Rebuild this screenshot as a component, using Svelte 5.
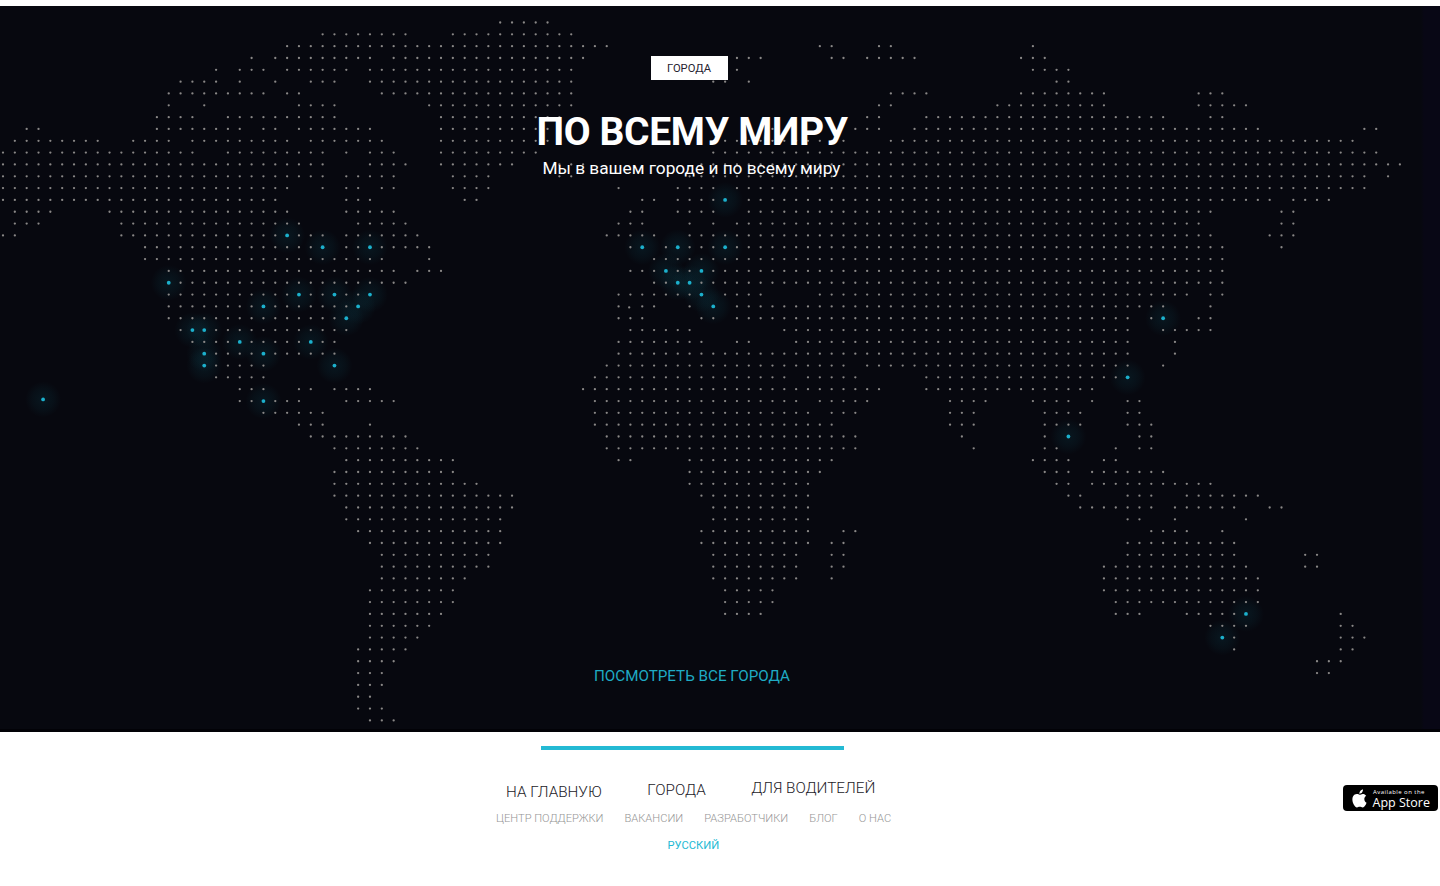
<script>
  // Land dots of the world map: one entry per grid row, "from-to" column ranges.
  const rows = [
    '42-46',
    '27-34,38-48',
    '24-51,69-70,74-75,87',
    '21,23-31,33-49,62-64,70-71,73-77,86-88',
    '18,20-22,24-29,31-48,62,87-90',
    '15-18,20,23,26-28,31-48,60-61,63,89-90',
    '14-22,24-25,32-48,75-78,86-93,101-103',
    '14,17,25-28,36-48,74-75,84-93,101-105',
    '13-16,19-28,37-47,73-74,78-98,102-103',
    '2-3,13-20,22-23,25-31,37-46,65,72-74,77-106,115-116',
    '1-8,11-14,16-24,26-32,37-46,61-71,75-114',
    '0-16,19-27,29,31-33,37-45,60-116',
    '0-27,31-34,37-43,47-49,59-118',
    '0-27,29-33,38-41,47-48,58-115,117',
    '0-24,27,29-30,32-33,38-41,52,57-60,62-115',
    '0-23,29-31,39-40,54-55,57-60,63-107,109-112',
    '1-4,9-24,29-33,53-54,57-60,63-102,108-109',
    '1-3,10-25,30-34,52-54,58,60,62-101,108-109',
    '0-1,10-27,29-35,51-55,58-102,107-109',
    '12-27,29-36,53-54,56-103,108',
    '12-32,36,55-103',
    '14-33,35-37,53-103',
    '14-34,55-103',
    '14-31,52-59,61-64,69-100,102-103',
    '14-30,52,54-55,58,60,62-98,102',
    '14-29,52-54,59-60,62-95,97-98,101-102',
    '15-29,53-58,66-95,98-102',
    '16-28,52-59,62-63,67-95,99',
    '17-28,52-95,99',
    '17-22,28,51-71,73-95,98',
    '18-22,50-66,68-72,78-95',
    '20-22,25-26,28-31,49-74,78-92',
    '20-25,29-33,50-67,69-73,80-83,87-90,92,95-96',
    '22-27,50-68,70-72,80-82,88-91,95-96',
    '25-27,31,50-70,80-82,88-91,95-97',
    '26-34,51-72,81,88,90,96-97',
    '28-35,51-72,82,88-89,94,96-97',
    '29-38,52-53,58-70,87-90,93-94',
    '28-38,58-69,88-90,92-98',
    '28-40,58-68,89-90,92-102',
    '28-43,59-68,90-91,95-97,100-106',
    '29-43,60-68,91-97,99-104,107-108',
    '29-42,60-68,95-96,99,105',
    '30-42,59-68,71-72,97-100,103',
    '31-42,59-68,70-71,95-104',
    '32-41,60-67,70-71,95-104,110-111',
    '32-41,60-67,70-71,93-105,110-111',
    '32-39,60-67,70,93-106',
    '31-38,61-65,93-106',
    '31-38,61-65,94-106',
    '31-37,61-64,94-96,100-105,113',
    '31-36,102-105,113-114',
    '31-35,103-104,113-115',
    '30-34,104,113-114',
    '30-33,111-113',
    '30-32,111-112',
    '30-32',
    '30-31',
    '30-32',
    '31-33',
  ];

  // Cities, as column and row of the same grid.
  const cityCells = [
    [61, 15], [24, 18], [27, 19], [31, 19], [54, 19], [57, 19], [61, 19],
    [56, 21], [59, 21], [14, 22], [57, 22], [58, 22],
    [25, 23], [28, 23], [31, 23], [59, 23], [22, 24], [30, 24], [60, 24],
    [29, 25], [98, 25], [16, 26], [17, 26], [20, 27], [26, 27],
    [17, 28], [22, 28], [17, 29], [28, 29], [95, 30], [22, 32],
    [90, 35], [105, 50], [103, 52],
  ];

  const px = (c) => 3.0 + c * 11.838;
  const py = (r) => 16.5 + r * 11.829;

  const taken = new Set(cityCells.map(([c, r]) => `${c}:${r}`));
  const dots = [{ x: 629.2, y: 301.4 }];
  rows.forEach((row, r) => {
    for (const part of row.split(',')) {
      const [a, b = a] = part.split('-').map(Number);
      for (let c = a; c <= b; c++) {
        if (!taken.has(`${c}:${r}`)) dots.push({ x: px(c), y: py(r) });
      }
    }
  });
  const cities = [
    { x: 43.1, y: 393.4 },
    ...cityCells.map(([c, r]) => ({ x: px(c), y: py(r) })),
  ];

  const mainLinks = ['НА ГЛАВНУЮ', 'ГОРОДА', 'ДЛЯ ВОДИТЕЛЕЙ'];
  const subLinks = ['ЦЕНТР ПОДДЕРЖКИ', 'ВАКАНСИИ', 'РАЗРАБОТЧИКИ', 'БЛОГ', 'О НАС'];
</script>

<div class="page">
  <section class="hero">
    <svg class="map" width="1440" height="726" viewBox="0 0 1440 726" aria-hidden="true">
      <defs>
        <radialGradient id="glow">
          <stop offset="0" stop-color="#12a0b8" stop-opacity="0.1" />
          <stop offset="0.6" stop-color="#12a0b8" stop-opacity="0.05" />
          <stop offset="1" stop-color="#12a0b8" stop-opacity="0" />
        </radialGradient>
      </defs>
      {#each cities as p}
        <circle cx={p.x} cy={p.y} r="18" fill="url(#glow)" />
      {/each}
      {#each dots as p}
        <circle cx={p.x} cy={p.y} r="1.15" fill="#8a8887" />
      {/each}
      {#each cities as p}
        <circle cx={p.x} cy={p.y} r="1.9" fill="#1cb0cc" />
      {/each}
    </svg>
    <div class="content">
      <span class="badge">ГОРОДА</span>
      <h1>ПО ВСЕМУ МИРУ</h1>
      <p>Мы в вашем городе и по всему миру</p>
      <a class="all" href="#cities">ПОСМОТРЕТЬ ВСЕ ГОРОДА</a>
    </div>
  </section>

  <footer>
    <div class="rule"></div>
    <div class="bar">
      <div class="links">
        <nav class="main">
          {#each mainLinks as l}<a href="#main">{l}</a>{/each}
        </nav>
        <nav class="sub">
          {#each subLinks as l}<a href="#sub">{l}</a>{/each}
        </nav>
        <a class="lang" href="#lang">РУССКИЙ</a>
      </div>
      <a class="store" href="#store">
        <svg width="16" height="19" viewBox="1.9 1.7 13.5 15.8" preserveAspectRatio="none" aria-hidden="true">
          <path fill="#fff" d="M13.1 10.1c0-1.8 1.5-2.7 1.6-2.8-.9-1.3-2.2-1.4-2.7-1.5-1.1-.1-2.2.7-2.8.7s-1.5-.7-2.4-.6c-1.3 0-2.4.7-3.1 1.8-1.3 2.3-.3 5.6.9 7.5.6.9 1.4 1.9 2.3 1.9.9 0 1.3-.6 2.4-.6s1.5.6 2.4.6c1 0 1.7-.9 2.3-1.8.7-1 1-2 1-2.1 0 0-1.9-.8-1.9-3.1zM11.2 4.6c.5-.6.9-1.5.8-2.4-.8 0-1.7.5-2.2 1.1-.5.6-.9 1.5-.8 2.300.8.1 1.700-.4 2.200-1z" />
        </svg>
        <span class="store-text">
          <small>Available on the</small>
          <strong>App Store</strong>
        </span>
      </a>
    </div>
  </footer>
</div>

<style>
  :global(body) {
    background: #fff;
  }
  .page {
    width: 1440px;
    height: 886px;
    overflow: hidden;
    padding-top: 6px;
    box-sizing: border-box;
    font-family: Roboto, sans-serif;
  }
  a {
    text-decoration: none;
    white-space: nowrap;
  }
  .hero {
    position: relative;
    height: 726px;
    box-sizing: border-box;
    background: linear-gradient(90deg, #07080f 0 1421px, #080715 1424px);
    border-bottom: 3px solid #020207;
  }
  .map {
    position: absolute;
    inset: 0;
  }
  .content {
    position: relative;
    width: 1386px;
    display: flex;
    flex-direction: column;
    align-items: center;
    color: #fff;
  }
  .badge {
    margin-top: 50px;
    margin-right: 7px;
    width: 77px;
    height: 24px;
    background: #fff;
    color: #25222f;
    font-size: 11.2px;
    line-height: 25px;
    text-align: center;
    text-indent: -1px;
  }
  h1 {
    margin: 32px 1.5px 0 0;
    font-size: 39px;
    line-height: 40px;
    font-weight: 700;
    letter-spacing: -0.35px;
    white-space: nowrap;
  }
  p {
    margin: 6px 3px 0 0;
    font-size: 17.25px;
    line-height: 20px;
    white-space: nowrap;
  }
  .all {
    margin-top: 488px;
    margin-right: 2px;
    font-size: 15.2px;
    line-height: 20px;
    color: #1fabc4;
  }
  .rule {
    margin: 14px 0 0 541.4px;
    width: 303px;
    height: 4px;
    background: #24bad4;
  }
  .bar {
    display: flex;
    align-items: flex-start;
  }
  .links {
    width: 1342px;
    flex: none;
    display: flex;
    flex-direction: column;
  }
  .main {
    display: flex;
    margin: 28px 0 0 506px;
    gap: 45.5px;
    height: 28px;
    font-size: 15.25px;
    line-height: 20px;
    font-weight: 300;
  }
  .main a {
    color: #1c1a28;
  }
  .main a:nth-child(1) {
    margin-top: 4px;
  }
  .main a:nth-child(2) {
    margin-top: 2px;
  }
  .sub {
    display: flex;
    gap: 21px;
    margin: 4px 0 0 496px;
    font-size: 11.13px;
    line-height: 17px;
    font-weight: 300;
  }
  .sub a {
    color: #959595;
  }
  .lang {
    margin: 10px 0 0 667.5px;
    font-size: 11.2px;
    line-height: 17px;
    color: #24bad4;
  }
  .store {
    margin-top: 35px;
    width: 95.5px;
    margin-left: 0.5px;
    height: 26px;
    flex: none;
    border-radius: 4px;
    background: #000;
    color: #fff;
    display: flex;
    align-items: center;
    padding-left: 8px;
    gap: 6px;
    box-sizing: border-box;
    font-family: 'Open Sans', sans-serif;
  }
  .store svg {
    flex: none;
    margin-top: 1px;
  }
  .store-text {
    display: flex;
    flex-direction: column;
    white-space: nowrap;
    margin-top: 2px;
  }
  small {
    font-size: 6px;
    line-height: 8px;
    letter-spacing: 0.45px;
    padding-left: 0.5px;
    font-weight: 500;
  }
  strong {
    font-size: 12.5px;
    line-height: 14px;
    font-weight: 500;
  }
</style>
